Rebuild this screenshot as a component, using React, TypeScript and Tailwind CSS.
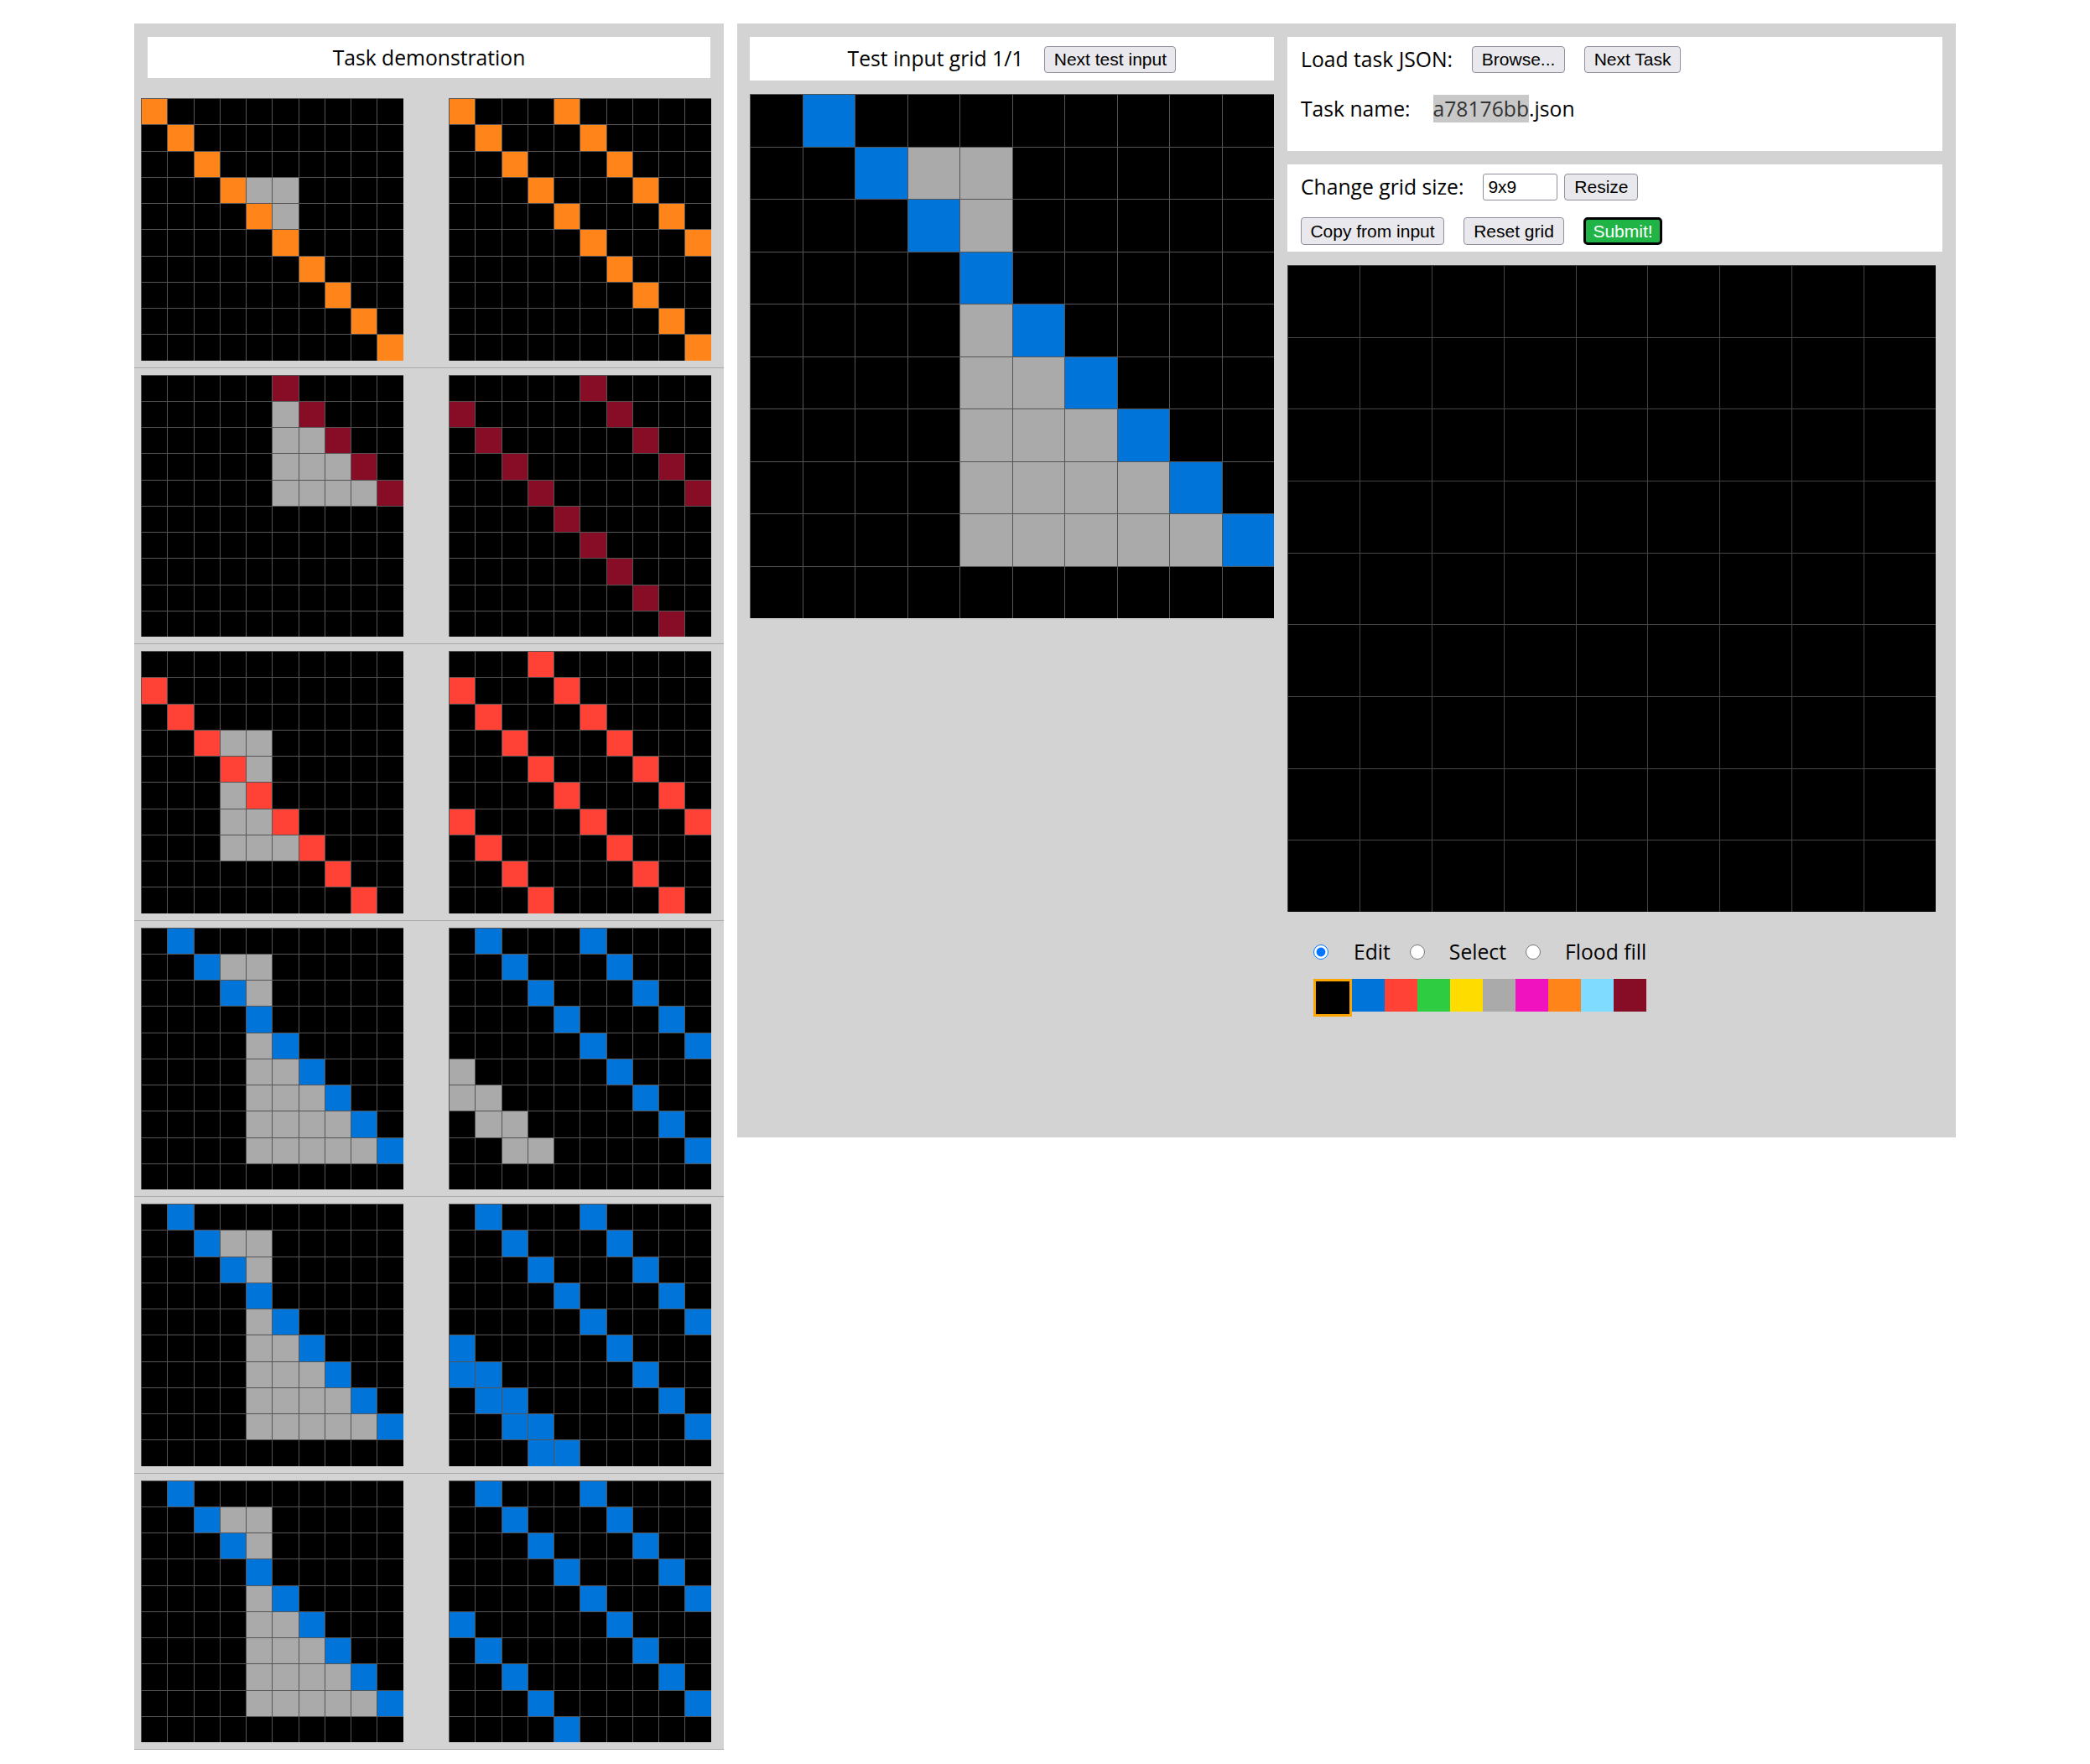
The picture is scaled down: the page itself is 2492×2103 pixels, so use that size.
import React from "react";

// ARC palette, indexed by cell value
const COLORS = [
  "bg-[#000000]",
  "bg-[#0074D9]",
  "bg-[#FF4136]",
  "bg-[#2ECC40]",
  "bg-[#FFDC00]",
  "bg-[#AAAAAA]",
  "bg-[#F012BE]",
  "bg-[#FF851B]",
  "bg-[#7FDBFF]",
  "bg-[#870C25]",
];

const TEST_INPUT = [
  "0100000000",
  "0015500000",
  "0001500000",
  "0000100000",
  "0000510000",
  "0000551000",
  "0000555100",
  "0000555510",
  "0000555551",
  "0000000000",
];

const PAIRS: { input: string[]; output: string[] }[] = [
  {
    input: [
      "7000000000",
      "0700000000",
      "0070000000",
      "0007550000",
      "0000750000",
      "0000070000",
      "0000007000",
      "0000000700",
      "0000000070",
      "0000000007",
    ],
    output: [
      "7000700000",
      "0700070000",
      "0070007000",
      "0007000700",
      "0000700070",
      "0000070007",
      "0000007000",
      "0000000700",
      "0000000070",
      "0000000007",
    ],
  },
  {
    input: [
      "0000090000",
      "0000059000",
      "0000055900",
      "0000055590",
      "0000055559",
      "0000000000",
      "0000000000",
      "0000000000",
      "0000000000",
      "0000000000",
    ],
    output: [
      "0000090000",
      "9000009000",
      "0900000900",
      "0090000090",
      "0009000009",
      "0000900000",
      "0000090000",
      "0000009000",
      "0000000900",
      "0000000090",
    ],
  },
  {
    input: [
      "0000000000",
      "2000000000",
      "0200000000",
      "0025500000",
      "0002500000",
      "0005200000",
      "0005520000",
      "0005552000",
      "0000000200",
      "0000000020",
    ],
    output: [
      "0002000000",
      "2000200000",
      "0200020000",
      "0020002000",
      "0002000200",
      "0000200020",
      "2000020002",
      "0200002000",
      "0020000200",
      "0002000020",
    ],
  },
  {
    input: TEST_INPUT,
    output: [
      "0100010000",
      "0010001000",
      "0001000100",
      "0000100010",
      "0000010001",
      "5000001000",
      "5500000100",
      "0550000010",
      "0055000001",
      "0000000000",
    ],
  },
  {
    input: TEST_INPUT,
    output: [
      "0100010000",
      "0010001000",
      "0001000100",
      "0000100010",
      "0000010001",
      "1000001000",
      "1100000100",
      "0110000010",
      "0011000001",
      "0001100000",
    ],
  },
  {
    input: TEST_INPUT,
    output: [
      "0100010000",
      "0010001000",
      "0001000100",
      "0000100010",
      "0000010001",
      "1000001000",
      "0100000100",
      "0010000010",
      "0001000001",
      "0000100000",
    ],
  },
];

const EMPTY_9 = Array.from({ length: 9 }, () => "000000000");

function Grid({ rows, className, line }: { rows: string[]; className: string; line: string }) {
  return (
    <div className={`grid shrink-0 ${className}`}>
      {rows.flatMap((r, i) =>
        r.split("").map((ch, j) => (
          <div key={`${i}-${j}`} className={`border-t border-l ${line} ${COLORS[Number(ch)]}`} />
        )),
      )}
    </div>
  );
}

function Btn({ className, children }: { className: string; children: React.ReactNode }) {
  return (
    <button
      className={`flex items-center justify-center shrink-0 rounded-[4px] border border-[#8f8f9d] bg-[#e9e9ed] text-[21px] text-black font-['Liberation_Sans',Arial,sans-serif] ${className}`}
    >
      {children}
    </button>
  );
}

export default function App() {
  return (
    <div className="min-h-[2103px] bg-white font-['Open_Sans',sans-serif] text-[24.7px] text-black">
      <div className="flex items-start justify-center pt-[28px]">
        {/* demonstration pairs */}
        <div className="w-[703px] bg-[#d3d3d3]">
          <div className="mx-[16px] my-[16px] flex h-[49px] items-center justify-center bg-white">
            Task demonstration
          </div>
          {PAIRS.map((p, i) => (
            <div key={i} className="flex gap-[54.5px] border-b border-[#a9a9a9] pl-[8px] pt-[8px] pb-[8px]">
              <Grid rows={p.input} line="border-[#555]" className="h-[312.5px] w-[312.5px] grid-cols-10 grid-rows-10" />
              <Grid rows={p.output} line="border-[#555]" className="h-[312.5px] w-[312.5px] grid-cols-10 grid-rows-10" />
            </div>
          ))}
        </div>

        {/* evaluation */}
        <div className="ml-[16px] flex h-[1328px] w-[1453px] bg-[#d3d3d3] pl-[15px] pt-[16px]">
          <div className="w-[625px]">
            <div className="flex h-[52px] items-center justify-center bg-white">
              <span>Test input grid 1/1</span>
              <Btn className="ml-[25px] mt-[2px] h-[32px] w-[157px]">Next test input</Btn>
            </div>
            <div className="mt-[16px]">
              <Grid rows={TEST_INPUT} line="border-[#555]" className="h-[625px] w-[625px] grid-cols-10 grid-rows-10" />
            </div>
          </div>

          <div className="ml-[16px] w-[781px]">
            <div className="h-[136px] bg-white pl-[16px] pt-[11px]">
              <div className="flex h-[32px] items-center">
                <span>Load task JSON:</span>
                <Btn className="ml-[23px] h-[32px] w-[111px]">Browse...</Btn>
                <Btn className="ml-[23px] h-[32px] w-[115px]">Next Task</Btn>
              </div>
              <div className="mt-[26px] flex h-[34px] items-center">
                <span>Task name:</span>
                <span className="ml-[27px]">
                  <span className="bg-[#c8c8c8] text-[#333]">a78176bb</span>.json
                </span>
              </div>
            </div>

            <div className="mt-[16px] h-[104px] bg-white pl-[16px] pt-[11px]">
              <div className="flex h-[32px] items-center">
                <span>Change grid size:</span>
                <div className="ml-[23px] flex h-[32px] w-[89px] items-center rounded-[3px] border border-[#8f8f9d] bg-white pl-[5px] text-[21px] font-['Liberation_Sans',Arial,sans-serif]">
                  9x9
                </div>
                <Btn className="ml-[8px] h-[32px] w-[88px]">Resize</Btn>
              </div>
              <div className="mt-[20px] flex h-[33px] items-center">
                <Btn className="h-[33px] w-[171px]">Copy from input</Btn>
                <Btn className="ml-[23px] h-[33px] w-[120px]">Reset grid</Btn>
                <button className="ml-[23px] flex h-[33px] w-[94px] items-center justify-center rounded-[5px] border-[3px] border-black bg-[#1fb445] text-[21px] text-white font-['Liberation_Sans',Arial,sans-serif]">
                  Submit!
                </button>
              </div>
            </div>

            <div className="mt-[16px]">
              <Grid rows={EMPTY_9} line="border-[#444]" className="h-[771px] w-[773px] grid-cols-9 grid-rows-9" />
            </div>

            <div className="mt-[32px] flex h-[32px] items-center pl-[31px]">
              <input type="radio" name="mode" defaultChecked className="m-0 h-[18px] w-[18px] accent-[#0075ff]" />
              <span className="ml-[30px]">Edit</span>
              <input type="radio" name="mode" className="ml-[23px] h-[18px] w-[18px]" />
              <span className="ml-[29px]">Select</span>
              <input type="radio" name="mode" className="ml-[23px] h-[18px] w-[18px]" />
              <span className="ml-[29px]">Flood fill</span>
            </div>

            <div className="mt-[16px] flex items-start pl-[31px]">
              <div className="h-[45px] w-[46px] border-[3px] border-[#FFA500] bg-black" />
              {COLORS.slice(1).map((c) => (
                <div key={c} className={`h-[39px] w-[39px] ${c}`} />
              ))}
            </div>
          </div>
        </div>
      </div>
    </div>
  );
}
